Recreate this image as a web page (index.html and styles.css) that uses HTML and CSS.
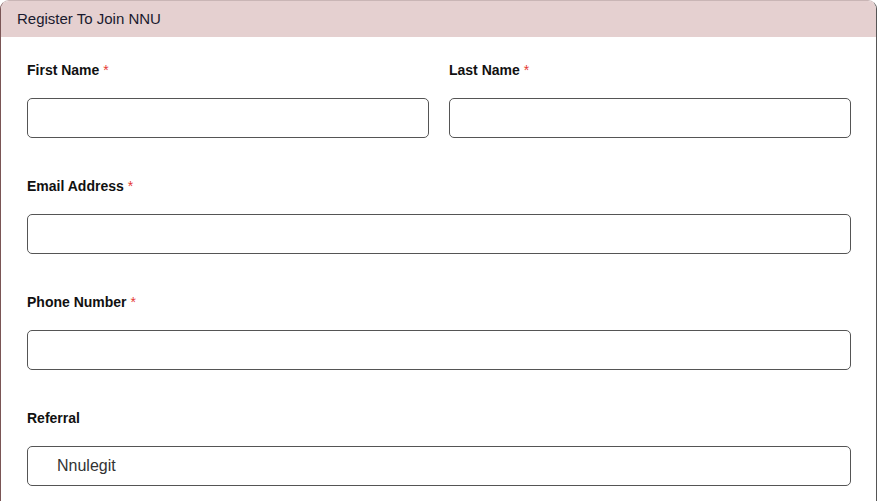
FILE: index.html
```html
<!DOCTYPE html>
<html lang="en">
<head>
  <meta charset="UTF-8" />
  <title>Register To Join NNU</title>
  <meta name="viewport" content="width=device-width, initial-scale=1.0" />
  <link rel="stylesheet" href="styles.css">
</head>
<body>

<div class="card">
  <div class="card-header">Register To Join NNU</div>

  <form class="card-body">
    <div class="row">
      <div class="field">
        <label for="first">First Name <span class="req">*</span></label>
        <input type="text" id="first">
      </div>
      <div class="field">
        <label for="last">Last Name <span class="req">*</span></label>
        <input type="text" id="last">
      </div>
    </div>

    <div class="field">
      <label for="email">Email Address <span class="req">*</span></label>
      <input type="email" id="email">
    </div>

    <div class="field">
      <label for="phone">Phone Number <span class="req">*</span></label>
      <input type="tel" id="phone">
    </div>

    <div class="field">
      <label for="referral">Referral</label>
      <input type="text" id="referral" class="referral" value="Nnulegit">
    </div>
  </form>
</div>

</body>
</html>
```

FILE: styles.css
```css
* { margin: 0; padding: 0; box-sizing: border-box; }

body {
  font-family: Arial, "Liberation Sans", sans-serif;
  background: #fff;
  color: #111;
}

.card {
  width: 877px;
  height: 501px;
  border: 1px solid #555;
  border-bottom: none;
  border-top-color: #c9b5b5;
  border-left-color: #7a5555;
  border-radius: 9px 9px 0 0;
  overflow: hidden;
}

.card-header {
  background: #e5d0d0;
  height: 36px;
  padding: 0 16px;
  font-size: 15px;
  line-height: 36px;
  color: #1a1a2e;
}

.card-body {
  padding: 25px 25px 0 26px;
}

.row {
  display: flex;
  gap: 20px;
}

.row .field {
  flex: 1;
}

.field {
  margin-bottom: 40px;
}

.field label {
  display: block;
  font-size: 14px;
  font-weight: bold;
  line-height: 16px;
  margin-bottom: 20px;
  color: #111;
}

.req {
  color: #e53935;
  font-weight: normal;
}

.field input {
  display: block;
  width: 100%;
  height: 40px;
  border: 1px solid #555;
  border-radius: 5px;
  font-family: Arial, "Liberation Sans", sans-serif;
  font-size: 16px;
  padding: 0 12px;
  color: #333;
  outline: none;
}

.field input.referral {
  padding-left: 29px;
}
```
